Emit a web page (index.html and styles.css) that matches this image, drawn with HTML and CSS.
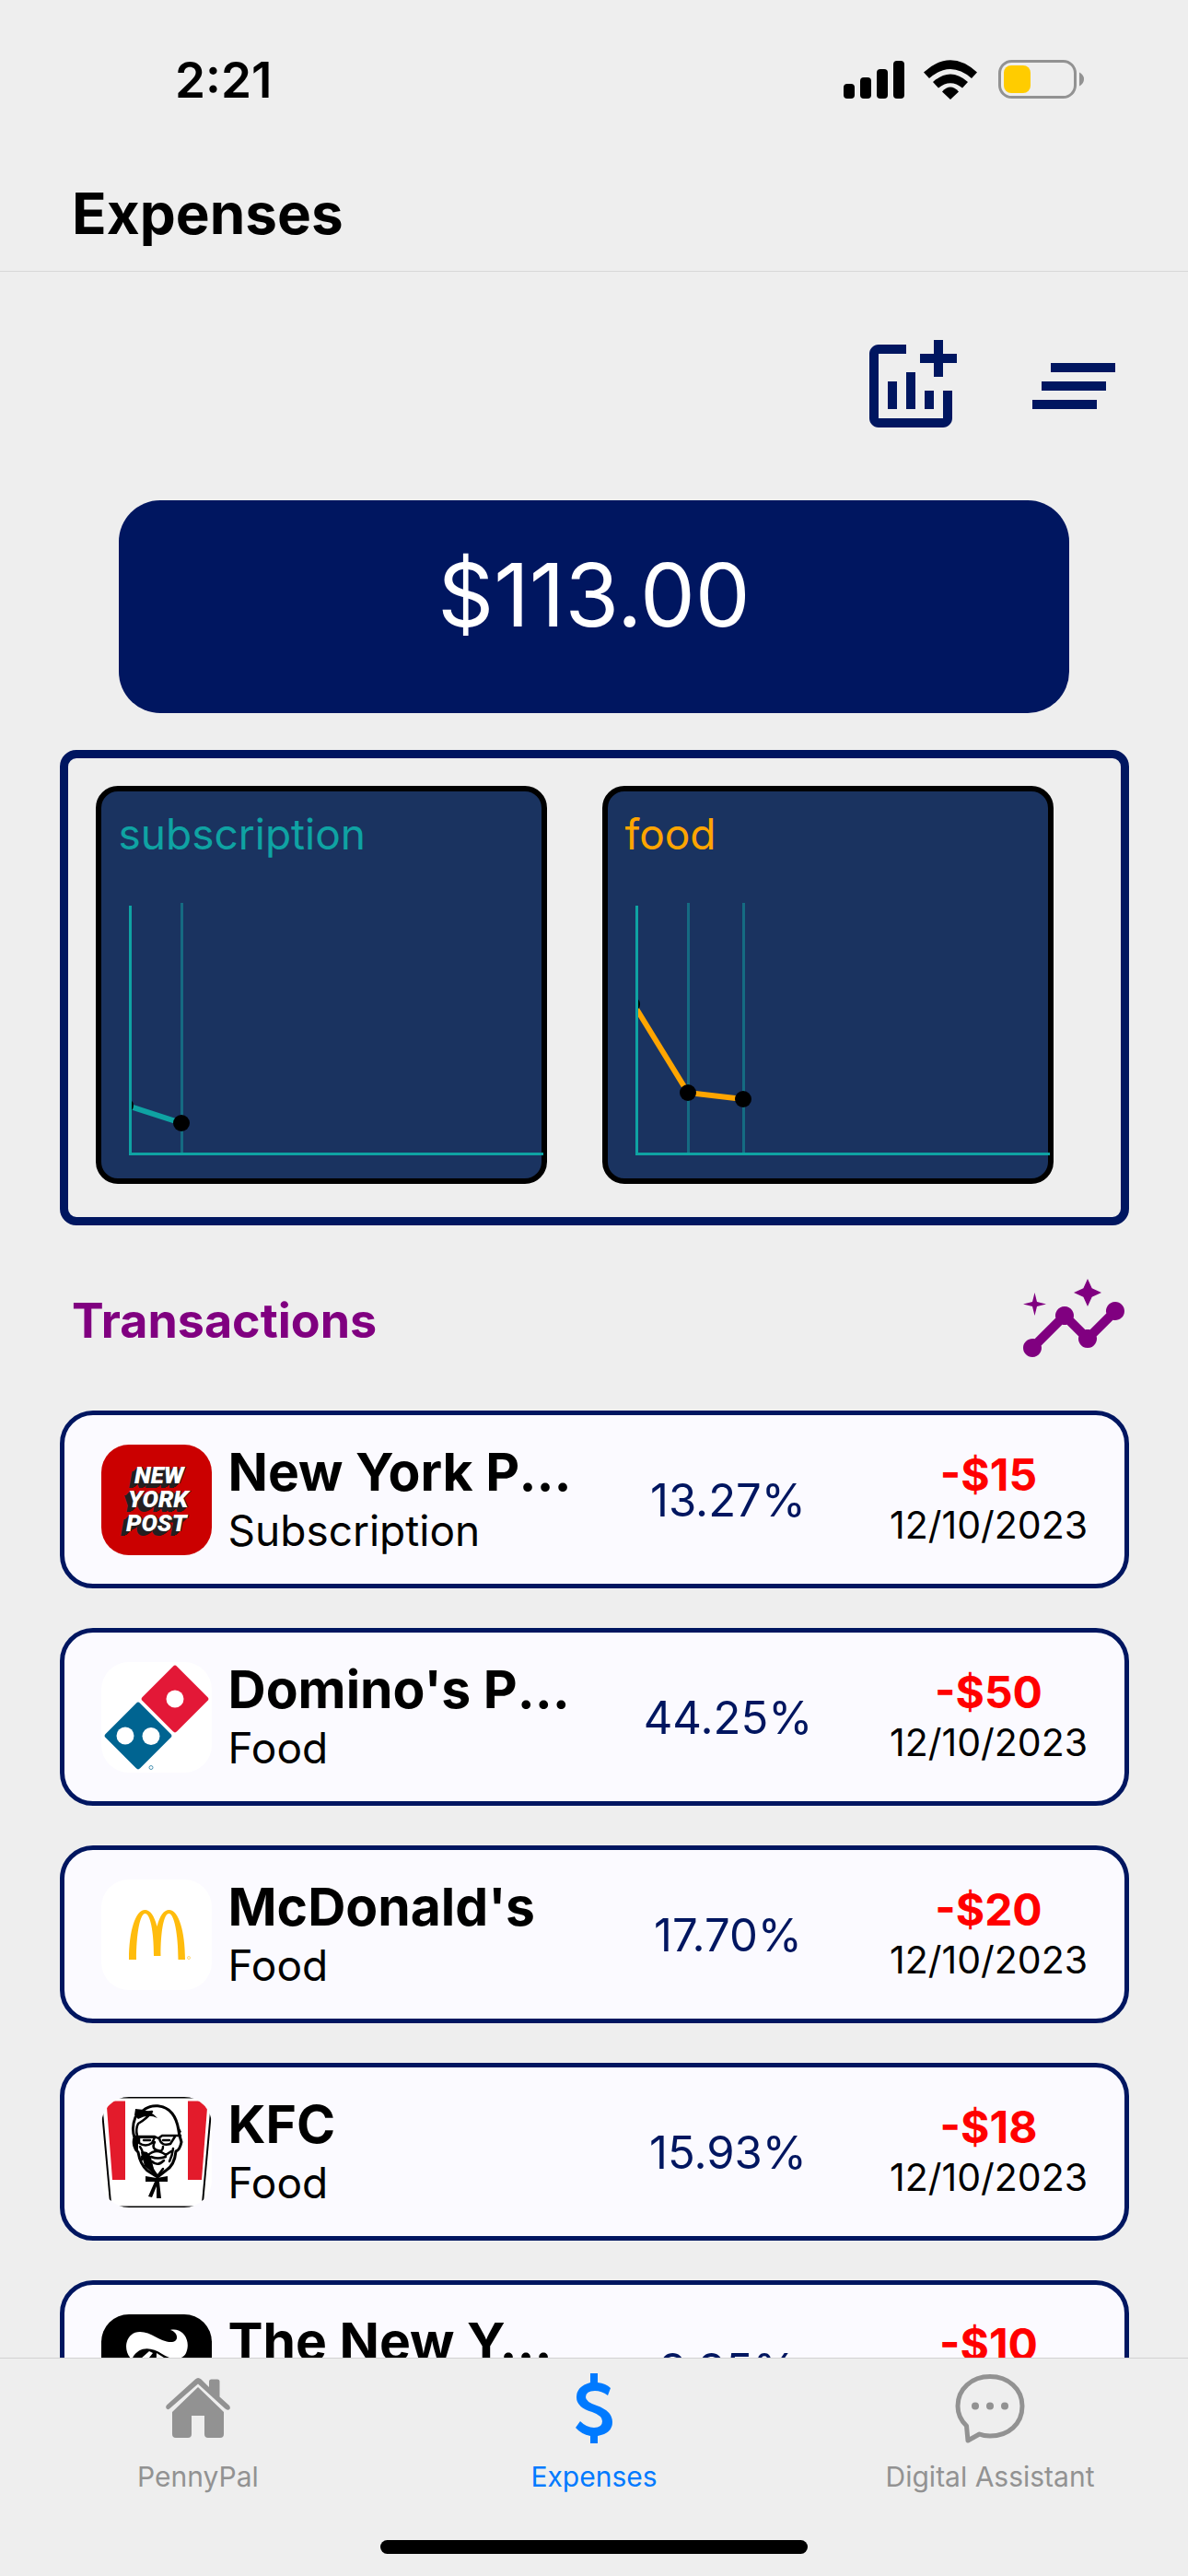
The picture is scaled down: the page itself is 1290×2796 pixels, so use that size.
FILE: index.html
```html
<!DOCTYPE html>
<html lang="en">
<head>
<meta charset="utf-8">
<meta name="viewport" content="width=device-width, initial-scale=1">
<title>Expenses</title>
<link rel="stylesheet" href="styles.css">
</head>
<body>
<div class="status">
  <span class="clock">2:21</span>
  <svg class="status-icons" width="264" height="48" viewBox="0 0 264 48" aria-hidden="true">
    <rect x="2" y="28" width="12" height="16" rx="4"/>
    <rect x="20" y="21" width="12" height="23" rx="4"/>
    <rect x="38" y="12" width="12" height="32" rx="4"/>
    <rect x="56" y="3" width="12" height="41" rx="4"/>
    <path d="M89 15.500 Q118 -11 147 15.500 L141 22 Q118 2 95 22 Z"/>
    <path d="M99 26 Q118 9 137 26 L131 32.500 Q118 22 105 32.500 Z"/>
    <path d="M109 36.500 Q118 26.500 127 36.500 L118 45 Z"/>
    <rect x="171.500" y="3.500" width="82" height="39" rx="13" fill="none" stroke="#929292" stroke-width="3"/>
    <rect x="176" y="8" width="29" height="30" rx="8" fill="#ffcc00"/>
    <path d="M258 15.500 Q263 18 263 23 Q263 28 258 30.500 Z" fill="#929292"/>
  </svg>
</div>
<header class="title-bar"><h1>Expenses</h1></header>

<main class="content">
  <div class="tools">
    <button type="button" aria-label="Add chart">
      <svg viewBox="0 0 24 24"><path d="M22 5v2h-3v3h-2V7h-3V5h3V2h2v3h3zm-3 14H5V5h6V3H5c-1.100 0-2 .9-2 2v14c0 1.100.9 2 2 2h14c1.100 0 2-.9 2-2v-6h-2v6zm-4-6v4h2v-4h-2zm-4 4h2V9h-2v8zm-2 0v-6H7v6h2z"/></svg>
    </button>
    <button type="button" aria-label="Clear all">
      <svg viewBox="0 0 24 24"><path d="M5 13h14v-2H5v2zm-2 4h14v-2H3v2zM7 7v2h14V7H7z"/></svg>
    </button>
  </div>

  <section class="total">$113.00</section>

  <section class="charts">
    <article class="chart">
      <h2>subscription</h2>
      <svg viewBox="0 0 478 300">
        <path class="grid-line" d="M87.500 12V283"/>
        <g clip-path="url(#plot)">
          <path d="M28 232L87 251" fill="none" stroke="#0fa3a3" stroke-width="6"/>
          <circle cx="26" cy="232" r="9"/>
        </g>
        <circle cx="87" cy="251" r="9"/>
        <path class="axis" d="M31.500 15V284.500H480"/>
      </svg>
    </article>
    <article class="chart food">
      <h2>food</h2>
      <svg viewBox="0 0 478 300">
        <defs><clipPath id="plot"><path d="M31 0H478V300H31Z"/></clipPath></defs>
        <path class="grid-line" d="M87.500 12V283M147.500 12V283"/>
        <g clip-path="url(#plot)">
          <path d="M28 122L87 218L147 225" fill="none" stroke="#ffa500" stroke-width="6"/>
          <circle cx="26" cy="122" r="9"/>
        </g>
        <circle cx="87" cy="218" r="9"/>
        <circle cx="147" cy="225" r="9"/>
        <path class="axis" d="M31.500 15V284.500H480"/>
      </svg>
    </article>
  </section>

  <div class="section-head">
    <h2>Transactions</h2>
    <button type="button" aria-label="Insights">
      <svg viewBox="0 0 24 24"><path d="M21 8c-1.450 0-2.260 1.440-1.930 2.510l-3.550 3.560c-.3-.09-.74-.09-1.040 0l-2.550-2.550C12.270 10.450 11.460 9 10 9c-1.450 0-2.270 1.440-1.930 2.520l-4.560 4.550C2.440 15.740 1 16.550 1 18c0 1.100.9 2 2 2 1.450 0 2.260-1.440 1.930-2.510l4.550-4.560c.3.09.74.09 1.040 0l2.550 2.550C12.730 16.550 13.540 18 15 18c1.450 0 2.270-1.440 1.930-2.520l3.560-3.550C21.560 12.260 23 11.450 23 10c0-1.100-.9-2-2-2z"/><path d="M15 9l.94-2.070L18 6l-2.060-.93L15 3l-.92 2.070L12 6l2.080.93zM3.500 11L4 9l2-.5L4 8l-.5-2L3 8l-2 .5L3 9z"/></svg>
    </button>
  </div>

  <ul class="list">
    <li class="row">
      <svg class="logo" viewBox="0 0 120 120" role="img" aria-label="New York Post">
        <rect width="120" height="120" fill="#cb0000"/>
        <g class="post">
          <text x="36" y="42">NEW</text>
          <text x="29" y="68">YORK</text>
          <text x="27" y="94">POST</text>
        </g>
      </svg>
      <div class="who"><h3>New York Post</h3><p>Subscription</p></div>
      <div class="share">13.27%</div>
      <div class="sum"><strong>-$15</strong><time>12/10/2023</time></div>
    </li>
    <li class="row">
      <svg class="logo" viewBox="0 0 120 120" role="img" aria-label="Domino's">
        <rect width="120" height="120" fill="#fff"/>
        <rect x="53.500" y="13.500" width="53" height="53" rx="3" transform="rotate(45 80 40)" fill="#e31837"/>
        <rect x="13.500" y="53.500" width="53" height="53" rx="3" transform="rotate(45 40 80)" fill="#006491"/>
        <g fill="#fff"><circle cx="80" cy="40" r="9.500"/><circle cx="26" cy="80" r="9.500"/><circle cx="54" cy="80.500" r="9.500"/></g>
        <circle cx="54" cy="114.500" r="2" fill="none" stroke="#4d93b2"/>
      </svg>
      <div class="who"><h3>Domino's Pizza</h3><p>Food</p></div>
      <div class="share">44.25%</div>
      <div class="sum"><strong>-$50</strong><time>12/10/2023</time></div>
    </li>
    <li class="row">
      <svg class="logo" viewBox="0 0 120 120" role="img" aria-label="McDonald's">
        <rect width="120" height="120" fill="#fff"/>
        <path d="M30 87C30 56 37 33 47.500 33C53 33 57.500 39 60.500 51C63.500 39 68 33 73.500 33C84 33 91 56 91 87H83.500C83.500 59 79 37 73.500 37C68 37 64.500 55 64.500 83H57C57 55 53 37 47.500 37C42 37 38 59 38 87Z" fill="#ffbc0d"/>
        <circle cx="95" cy="85" r="1.500" fill="none" stroke="#ffd97a"/>
      </svg>
      <div class="who"><h3>McDonald's</h3><p>Food</p></div>
      <div class="share">17.70%</div>
      <div class="sum"><strong>-$20</strong><time>12/10/2023</time></div>
    </li>
    <li class="row">
      <svg class="logo" viewBox="0 0 120 120" role="img" aria-label="KFC">
        <rect width="120" height="120" fill="#fff"/>
        <path d="M19 .5H101M19 119.500H101M1 16L10 115M119 16L110 115" stroke="#000" stroke-width="2"/>
        <path d="M6 11Q8 4 15 4.500H26V90H12ZM94 4.500H106Q112 6 115 12L109 90H94Z" fill="#e31b2b"/>
        <g fill="none" stroke="#000" stroke-width="2.500" stroke-linecap="round" stroke-linejoin="round">
          <path d="M45 15C54 7 69 8 77 18C84 27 83 34 85 42L87 49C86 54 84 58 81 59C80 70 75 77 70 80L61 87L50 80C43 74 41 66 40 60C36 57 34 50 36 44C33 35 35 27 37 22" stroke-width="3"/>
          <path d="M38 18L47 17L55 16Q49 24 40 29Q37 35 39 42M36 43H58L62 45L66 42H86M41 43V50Q48 55 55 50L58 44M63 45Q65 54 75 51L80 43M58 49Q54 56 61 58Q67 60 67 54M46 47H53M67 47H74M42 54Q47 61 44 68M78 56Q77 64 74 70"/>
          <path d="M51 63Q60 55 70 63L76 59M49 61L44 65M54 65Q61 68 70 65M55 70Q61 76 68 69M52 70L56 79L61 86L67 78"/>
        </g>
        <path d="M37 13Q52 13 61 23Q51 18 40 24L36 20ZM35 42H58V45H40V59L36 54ZM43 60Q50 57 54 66L57 78L61 87L47 75ZM83 30L87 38L83 41Z"/>
        <path d="M48 86L60 88L72 86V92H63L65 110H60L60 97L55 109L51 108L58 92H48Z"/>
      </svg>
      <div class="who"><h3>KFC</h3><p>Food</p></div>
      <div class="share">15.93%</div>
      <div class="sum"><strong>-$18</strong><time>12/10/2023</time></div>
    </li>
    <li class="row">
      <svg class="logo" viewBox="0 0 120 120" role="img" aria-label="The New York Times">
        <rect width="120" height="120"/>
        <path d="M75 17C88 14 98 28 92 42C88 50 76 50 66 43C54 35 40 34 33 49C22 38 27 19 42 19C55 19 65 31 77 30C85 29 83 19 75 17ZM34 56L52 40L56 42L40 62ZM60 42L68 47V98L58 104Z" fill="#fff"/>
      </svg>
      <div class="who"><h3>The New York Times</h3><p>Subscription</p></div>
      <div class="share">8.85%</div>
      <div class="sum"><strong>-$10</strong><time>12/10/2023</time></div>
    </li>
  </ul>
</main>

<nav class="tabs">
  <div class="tab-links">
    <a href="#pennypal">
      <svg viewBox="0 0 90 84"><path d="M57 15V9Q57 6.500 59.500 6.500H66Q68.500 6.500 68.500 9V25.500L79 35Q81 38 78.500 39.500Q76.500 40.500 74 38L45 11.500L14 38.500Q12 40 10.500 38Q9.500 36 11 34.500L42 6.500Q45 3.500 48.500 6.500Z"/><path d="M45 15L73 42V66Q73 70 69 70H56Q52 70 52 66V46H38V66Q38 70 34 70H21Q17 70 17 66V42Z"/></svg>
      PennyPal
    </a>
    <a href="#expenses" class="current" aria-current="page">
      <svg viewBox="0 0 90 84"><path d="M41 0H49V10Q58 11 63 16L60 24Q53 19 46 19Q36 19 36 26Q36 31 48 35Q65 41 65 53Q65 65 49 68V76H41V68Q31 66 25 59L30 52Q37 59 45 59Q54 59 54 52Q54 46 43 42Q26 37 26 26Q26 14 41 10Z"/></svg>
      Expenses
    </a>
    <a href="#assistant">
      <svg viewBox="0 0 90 84"><path d="M45 3.500C65 3.500 80 17 80 35.500C80 55 65 68 45 68Q38 68 33.500 66L21 73L19.500 57Q10 48 10 35.500C10 17 25 3.500 45 3.500Z" fill="none" stroke="currentColor" stroke-width="5" stroke-linejoin="round"/><circle cx="29" cy="35.500" r="4"/><circle cx="45" cy="35.500" r="4"/><circle cx="61" cy="35.500" r="4"/></svg>
      Digital Assistant
    </a>
  </div>
  <div class="home-bar"></div>
</nav>
</body>
</html>
```
FILE: styles.css
```css
* {
  box-sizing: border-box;
}

body {
  margin: 0;
  height: 100vh;
  display: flex;
  flex-direction: column;
  background: #eeeeee;
  color: #000;
  font-family: Inter, "Liberation Sans", sans-serif;
}

h1, h2, h3, p, ul {
  margin: 0;
  padding: 0;
}

button {
  display: block;
  padding: 0;
  border: 0;
  background: none;
  color: inherit;
}

svg {
  display: block;
  fill: currentColor;
}

.status {
  display: flex;
  align-items: center;
  justify-content: space-between;
  height: 174px;
  padding: 0 112px 0 190px;
  flex: none;
}

.clock {
  font-size: 53px;
  font-weight: 600;
}

.title-bar {
  flex: none;
  padding: 18px 78px 22px;
  border-bottom: 1px solid #d8d8d8;
}

h1 {
  font-size: 62px;
  line-height: 80px;
  font-weight: 700;
}

.content {
  flex: 1;
  min-height: 0;
  overflow: hidden;
}

.tools {
  display: flex;
  justify-content: flex-end;
  gap: 57px;
  padding: 64px 64px;
  color: #001660;
}

.tools svg, .section-head svg {
  width: 120px;
  height: 120px;
}

.total {
  width: 80%;
  margin: 0 auto 40px;
  padding: 39px 0 64px;
  border-radius: 45px;
  background: #001660;
  color: #fff;
  font-size: 95px;
  line-height: 128px;
  text-align: center;
}

.charts {
  display: flex;
  gap: 60px;
  width: 90%;
  margin: 0 auto;
  padding: 30px;
  padding-bottom: 36px;
  border: 9px solid #001660;
  border-radius: 18px;
  overflow: hidden;
}

.chart {
  flex: none;
  width: 490px;
  border: 6px solid #000;
  border-radius: 24px;
  background: #1a3360;
}

.chart h2 {
  padding: 14px 0 0 19px;
  color: #0fa3a3;
  font-size: 46px;
  line-height: 64px;
  font-weight: 400;
}

.chart.food h2 {
  color: #ffa500;
}

.chart svg {
  width: 100%;
  margin: 31px 0 11px;
  fill: #000;
  overflow: visible;
}

.axis {
  fill: none;
  stroke: #0fa3a3;
  stroke-width: 3;
}

.grid-line {
  fill: none;
  stroke: #0fa3a3;
  stroke-opacity: .5;
  stroke-width: 3;
}

.section-head {
  display: flex;
  align-items: center;
  justify-content: space-between;
  padding: 43px 64px 38px 78px;
  color: #800080;
}

.section-head h2 {
  font-size: 52px;
  font-weight: 700;
}

.list {
  display: flex;
  flex-direction: column;
  gap: 43px;
  width: 90%;
  margin: 0 auto;
  list-style: none;
}

.row {
  display: flex;
  align-items: center;
  padding: 27px 0 26px 40px;
  border: 5px solid #001660;
  border-radius: 36px;
  background: #fbfaff;
}

.logo {
  flex: none;
  width: 120px;
  height: 120px;
  border-radius: 30px;
}

.post {
  fill: #fff;
  font: italic 900 26px Roboto, "Liberation Sans", sans-serif;
  text-shadow: -1px 1px #231f20, 1px 0 #231f20, -2px 2px #231f20, -3px 3px #231f20, -4px 4px #231f20, -6px 5px #231f20;
}

.who {
  flex: 1;
  min-width: 0;
  padding: 4px 24px 0 18px;
}

.who h3 {
  overflow: hidden;
  font-size: 57px;
  line-height: 62px;
  font-weight: 700;
  text-overflow: ellipsis;
  white-space: nowrap;
}

.who p {
  font-size: 46px;
  line-height: 64px;
}

.share {
  width: 272px;
  color: #001660;
  font-size: 49px;
  text-align: center;
}

.sum {
  display: flex;
  flex-direction: column;
  width: 294px;
  font-size: 41px;
  line-height: 54px;
  text-align: center;
}

.sum strong {
  color: #ff0000;
  font-size: 48px;
  font-weight: 700;
}

.tabs {
  flex: none;
  padding: 16px 0 24px;
  border-top: 1px solid #d2d2d2;
  background: #eeeeee;
}

.tab-links {
  display: grid;
  grid-template-columns: repeat(3, 1fr);
}

.tab-links a {
  display: flex;
  flex-direction: column;
  align-items: center;
  gap: 8px;
  color: #929292;
  font-size: 30px;
  line-height: 40px;
  text-decoration: none;
}

.tab-links .current {
  color: #007aff;
}

.tab-links svg {
  width: 90px;
  height: 84px;
}

.home-bar {
  width: 36%;
  height: 15px;
  margin: 49px auto 0;
  border-radius: 8px;
  background: #000;
}
```
